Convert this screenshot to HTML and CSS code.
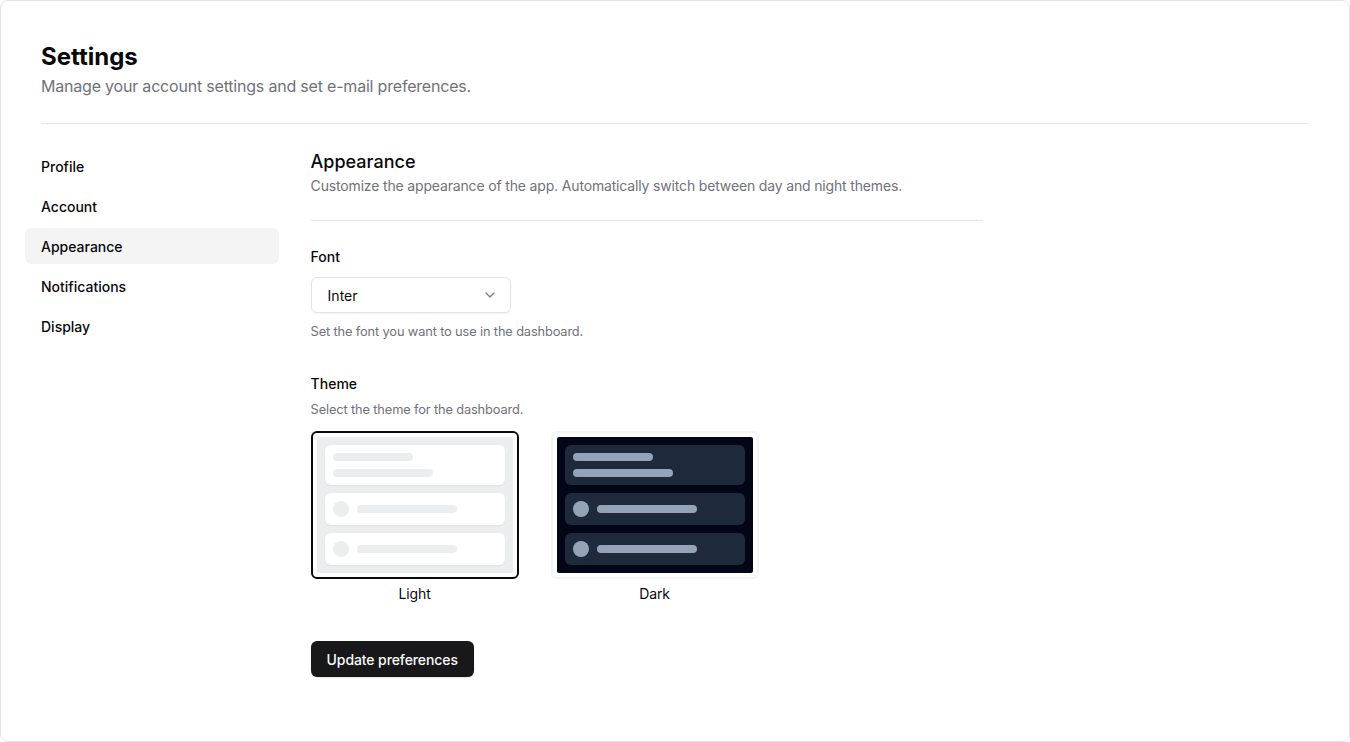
FILE: index.html
```html
<!DOCTYPE html>
<html lang="en">
<head>
<meta charset="utf-8">
<title>Settings</title>
<link rel="stylesheet" href="styles.css">
</head>
<body>
<div class="page">
  <header class="header">
    <h2 class="title">Settings</h2>
    <p class="subtitle">Manage your account settings and set e-mail preferences.</p>
  </header>
  <div class="sep sep-main"></div>
  <div class="layout">
    <aside class="aside">
      <nav class="nav">
        <a class="nav-item">Profile</a>
        <a class="nav-item">Account</a>
        <a class="nav-item active">Appearance</a>
        <a class="nav-item">Notifications</a>
        <a class="nav-item">Display</a>
      </nav>
    </aside>
    <main class="content">
      <div class="section-head">
        <h3 class="section-title">Appearance</h3>
        <p class="section-desc">Customize the appearance of the app. Automatically switch between day and night themes.</p>
      </div>
      <div class="sep sep-section"></div>
      <form class="form">
        <div class="field field-font">
          <label class="label">Font</label>
          <div class="select">
            <span class="select-value">Inter</span>
            <svg class="chevron" viewBox="0 0 24 24" width="16" height="16" fill="none" stroke="currentColor" stroke-width="2" stroke-linecap="round" stroke-linejoin="round"><path d="m6 9 6 6 6-6"/></svg>
          </div>
          <p class="help help-font">Set the font you want to use in the dashboard.</p>
        </div>
        <div class="field field-theme">
          <label class="label">Theme</label>
          <p class="help help-theme">Select the theme for the dashboard.</p>
          <div class="themes">
            <div class="theme">
              <div class="theme-frame selected">
                <div class="preview light">
                  <div class="pcard stack">
                    <div class="bar w80"></div>
                    <div class="bar w100"></div>
                  </div>
                  <div class="pcard row">
                    <div class="dot"></div>
                    <div class="bar w100"></div>
                  </div>
                  <div class="pcard row">
                    <div class="dot"></div>
                    <div class="bar w100"></div>
                  </div>
                </div>
              </div>
              <span class="theme-name">Light</span>
            </div>
            <div class="theme">
              <div class="theme-frame">
                <div class="preview dark">
                  <div class="pcard stack">
                    <div class="bar w80"></div>
                    <div class="bar w100"></div>
                  </div>
                  <div class="pcard row">
                    <div class="dot"></div>
                    <div class="bar w100"></div>
                  </div>
                  <div class="pcard row">
                    <div class="dot"></div>
                    <div class="bar w100"></div>
                  </div>
                </div>
              </div>
              <span class="theme-name">Dark</span>
            </div>
          </div>
        </div>
        <button type="button" class="btn">Update preferences</button>
      </form>
    </main>
  </div>
</div>
</body>
</html>
```

FILE: styles.css
```css
* { box-sizing: border-box; }
html, body { margin: 0; padding: 0; background: #ffffff; }
body {
  font-family: Inter, "Noto Sans", "Liberation Sans", sans-serif;
  color: #09090b;
  -webkit-font-smoothing: antialiased;
}
.page {
  width: 1350px;
  height: 742px;
  border: 1px solid #e4e4e7;
  border-radius: 8px;
  padding: 40px;
  overflow: hidden;
}
.header { display: flex; flex-direction: column; gap: 1px; }
.title {
  margin: 0;
  font-size: 24px;
  line-height: 32px;
  font-weight: 700;
  letter-spacing: 0;
}
.subtitle {
  margin: 0;
  font-size: 16px;
  line-height: 24px;
  color: #71717a;
  letter-spacing: -0.2px;
}
.sep { height: 1px; background: #e4e4e7; }
.sep-main { margin: 25px 0 24px; }
.sep-section { margin: 24px 0 0; }
.layout { display: flex; gap: 48px; }
.aside { flex: 0 0 20%; margin: 0 -16px; }
.nav { display: flex; flex-direction: column; gap: 4px; }
.nav-item {
  display: flex;
  align-items: center;
  height: 36px;
  padding: 0 16px;
  border-radius: 6px;
  font-size: 14px;
  font-weight: 500;
  color: #09090b;
}
.nav-item.active { background: #f4f4f5; }
.content { flex: 1; max-width: 672px; }
.section-title {
  margin: 0;
  font-size: 18px;
  line-height: 28px;
  font-weight: 500;
}
.section-desc {
  margin: 0;
  font-size: 14px;
  line-height: 20px;
  color: #71717a;
  letter-spacing: -0.16px;
}
.form { display: flex; flex-direction: column; padding-top: 26px; }
.field { display: flex; flex-direction: column; }
.label {
  font-size: 14px;
  line-height: 20px;
  font-weight: 500;
}
.select {
  position: relative;
  margin-top: 10px;
  width: 200px;
  height: 36px;
  border: 1px solid #e4e4e7;
  border-radius: 6px;
  display: flex;
  align-items: center;
  padding: 0 16px;
  box-shadow: 0 1px 2px rgba(0,0,0,0.05);
  font-size: 14px;
}
.chevron { position: absolute; right: 12px; top: 9px; color: #09090b; opacity: 0.5; }
.help {
  margin: 0;
  font-size: 12.8px;
  line-height: 18px;
  color: #71717a;
  letter-spacing: -0.13px;
}
.help-font { margin-top: 10px; }
.field-theme { margin-top: 33px; }
.help-theme { margin-top: 7px; }
.themes {
  display: grid;
  grid-template-columns: 1fr 1fr;
  gap: 32px;
  max-width: 448px;
  margin-top: 12px;
}
.theme { display: flex; flex-direction: column; }
.theme-frame {
  border: 2px solid #f4f4f5;
  border-radius: 6px;
  padding: 4px;
}
.theme-frame.selected { border-color: #09090b; }
.preview {
  display: flex;
  flex-direction: column;
  gap: 8px;
  padding: 8px;
  border-radius: 2px;
}
.preview.light { background: #ecedef; }
.preview.dark { background: #020617; }
.pcard {
  border-radius: 6px;
  padding: 8px;
  box-shadow: 0 1px 2px rgba(0,0,0,0.05);
}
.light .pcard { background: #ffffff; }
.dark .pcard { background: #1e293b; }
.pcard.stack { display: flex; flex-direction: column; gap: 8px; }
.pcard.row { display: flex; align-items: center; gap: 8px; }
.bar { height: 8px; border-radius: 8px; }
.w80 { width: 80px; }
.w100 { width: 100px; }
.dot { width: 16px; height: 16px; border-radius: 50%; }
.light .bar, .light .dot { background: #ecedef; }
.dark .bar, .dark .dot { background: #94a3b8; }
.theme-name {
  display: block;
  text-align: center;
  font-size: 14px;
  line-height: 20px;
  margin-top: 5px;
  letter-spacing: -0.1px;
}
.btn {
  align-self: flex-start;
  margin-top: 37px;
  height: 36px;
  padding: 0 16px;
  border: none;
  border-radius: 6px;
  background: #18181b;
  color: #fafafa;
  font-family: inherit;
  font-size: 14px;
  font-weight: 500;
  letter-spacing: -0.1px;
  box-shadow: 0 1px 2px rgba(0,0,0,0.1);
}
```
